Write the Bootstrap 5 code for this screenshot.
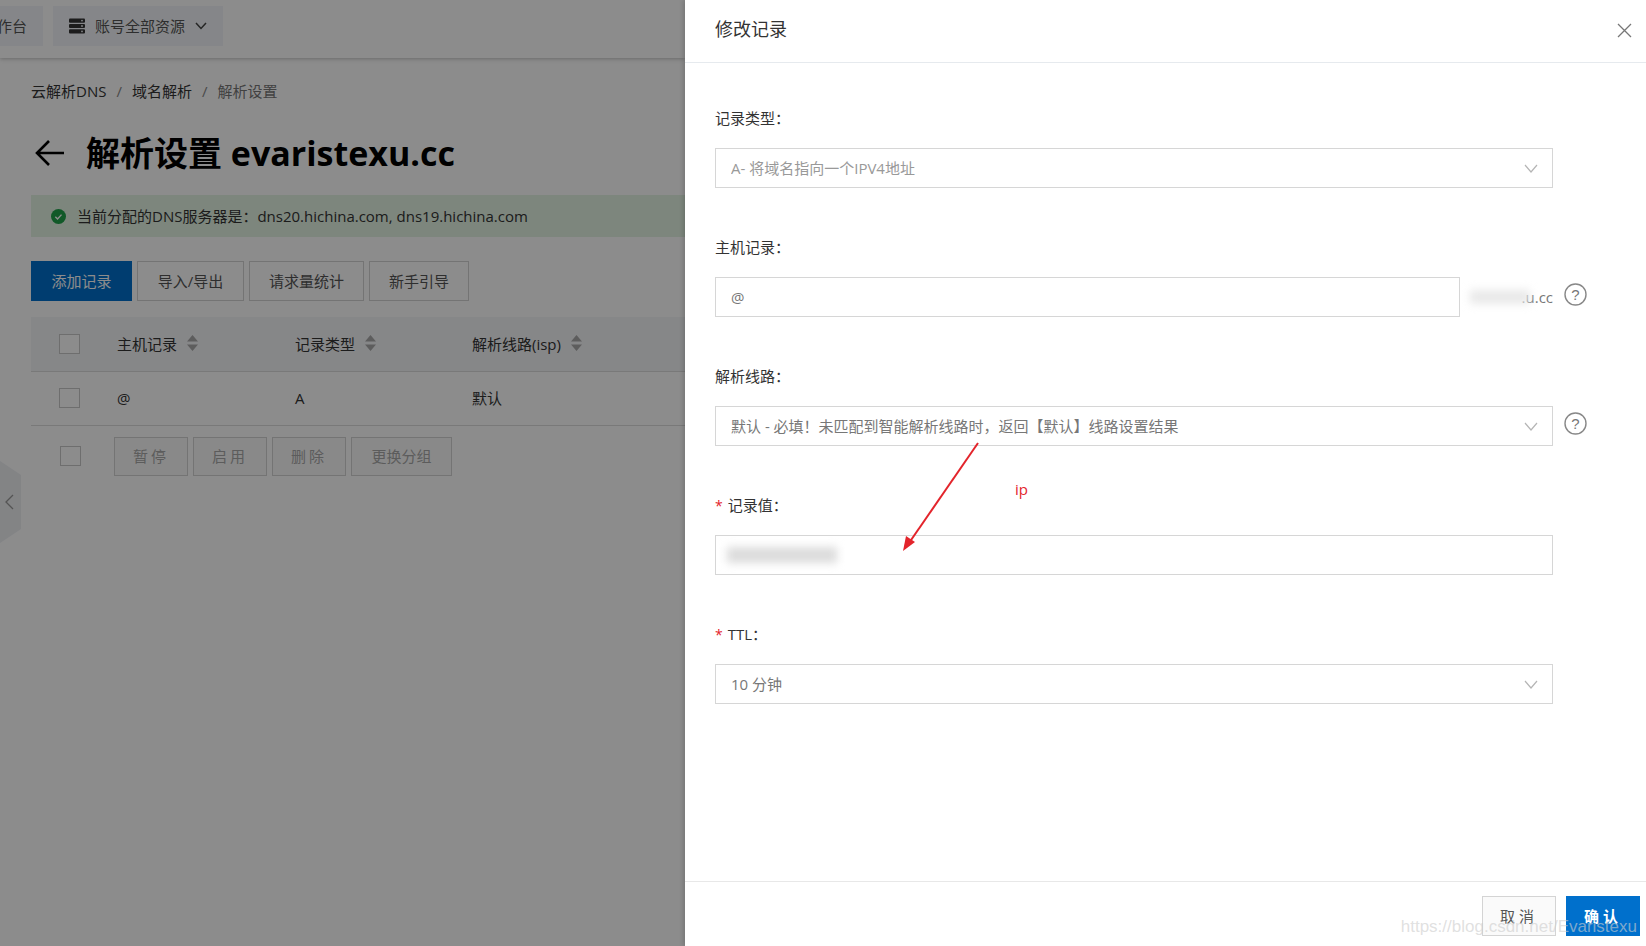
<!DOCTYPE html>
<html lang="zh-CN">
<head>
  <meta charset="UTF-8" />
  <meta name="viewport" content="width=device-width, initial-scale=1.0"/>
  <title>修改记录</title>
  <link href="https://cdn.jsdelivr.net/npm/bootstrap@5.3.0/dist/css/bootstrap.min.css" rel="stylesheet">
  <style>
    html, body { height: 946px; overflow: hidden; }
    body { font-family: "Open Sans", "Noto Sans CJK SC", sans-serif; font-size: 15px; color: #333; background: #fff; }

    /* page behind the drawer */
    .page-side { width: 685px; flex: none; height: 946px; overflow: hidden; background: #fff; }
    .page-dim { background: rgba(0,0,0,.45); inset: 0; }
    .top-strip { height: 58px; padding-top: 6px; gap: 10px; background: #fff; box-shadow: 0 1px 4px rgba(0,0,0,.25); }
    .strip-btn { height: 40px; padding: 0 16px; background: #f2f5f9; color: #555; gap: 6px; white-space: nowrap; }
    .strip-first { margin-left: -34px; }
    .page-inner { padding: 22px 0 0 31px; }
    .crumbs { --bs-breadcrumb-margin-bottom: 0; --bs-breadcrumb-divider-color: #888; --bs-breadcrumb-item-active-color: #777; --bs-breadcrumb-item-padding-x: 10px; height: 22px; line-height: 22px; font-size: 15px; }
    .crumbs a { color: #333; text-decoration: none; }
    .page-head { height: 50px; margin-top: 26px; gap: 21px; white-space: nowrap; }
    .page-head h1 { font-size: 34px; font-weight: 700; color: #000; margin: 0; line-height: 50px; }
    .dns-note { height: 42px; margin-top: 17px; background: #e4f4e4; padding-left: 20px; gap: 11px; white-space: nowrap; color: #333; }
    .tool-row { margin-top: 24px; gap: 5px; }
    .flat-btn { height: 40px; border-radius: 0; border: 1px solid #d4d4d4; background: #fff; color: #555; font-size: 15px; padding: 0; }
    .flat-blue { background: #0070cc; border-color: #0070cc; color: #fff; width: 101px; }
    .w-107 { width: 107px; }
    .w-115 { width: 115px; }
    .w-100px { width: 100px; }
    .rec-table { margin: 16px 0 0; table-layout: fixed; width: 654px; --bs-table-border-color: #ddd; color: #333; }
    .rec-table th, .rec-table td { padding: 0; vertical-align: middle; font-weight: 400; white-space: nowrap; }
    .rec-table thead th { background: #f5f6f8; height: 54px; }
    .rec-table tbody td { height: 54px; }
    .tick { display: block; width: 21px; height: 20px; border: 1px solid #c8c8c8; background: #fff; margin-left: 28px; }
    .sort-ico { margin-left: 10px; vertical-align: -1px; }
    .bulk-row { margin-top: 11px; gap: 5px; }
    .bulk-row .tick { margin-left: 29px; margin-right: 28px; }
    .bulk-btn { width: 74px; height: 39px; border-radius: 0; border: 1px solid #d4d4d4; background: #fafafa; color: #a8a8a8; font-size: 15px; padding: 0; letter-spacing: 3px; }
    .bulk-wide { width: 101px; letter-spacing: 0; }
    .side-handle { left: 0; top: 461px; width: 21px; height: 82px; background: #eef0f3; clip-path: polygon(0 0, 100% 14px, 100% 68px, 0 100%); }

    /* drawer */
    .drawer { box-shadow: -2px 0 4px rgba(0,0,0,.15); background: #fff; }
    .drawer-head { height: 63px; padding: 0 14px 2px 30px; border-bottom: 1px solid #e6eaee; }
    .drawer-head h2 { font-size: 18px; font-weight: 400; color: #333; margin: 0; }
    .drawer-form { padding: 44px 0 0 30px; }
    .field { margin-bottom: 48px; }
    .field-label { height: 22px; line-height: 22px; margin-bottom: 19px; color: #333; font-size: 15px; }
    .need { color: #e3242b; margin-right: 5px; font-size: 14px; }
    .ctl-w { width: 838px; }
    .form-control.ctl, .form-select.ctl { height: 40px; border-radius: 0; border: 1px solid #d6d6d6; background-color: #fff; color: #777; font-size: 15px; padding: 0 15px; box-shadow: none; }
    .form-select.ctl { padding-right: 40px; background-image: url("data:image/svg+xml,%3Csvg xmlns='http://www.w3.org/2000/svg' width='14' height='9' viewBox='0 0 14 9'%3E%3Cpath d='M1 1l6 7 6-7' fill='none' stroke='%23b5b5b5' stroke-width='1.2'/%3E%3C/svg%3E"); background-size: 14px 9px; background-position: right 14px center; }
    .form-select.ctl:disabled { color: #999; }
    .ctl-host { width: 745px; }
    .host-suffix { width: 93px; color: #777; line-height: 40px; white-space: nowrap; font-size: 15px; }
    .smudge { background: #e4e4e4; filter: blur(4px); }
    .smudge-host { left: 10px; top: 13px; width: 60px; height: 14px; background: #e9e9e9; }
    .smudge-ip { left: 12px; top: 12px; width: 110px; height: 16px; background: #dcdcdc; }
    .help-ico { flex: none; margin: 6px 0 0 11px; }
    .help-row { width: 873px; }
    .drawer-foot { height: 65px; margin-top: auto; border-top: 1px solid #e8e8e8; padding: 14px 6px 0 0; gap: 10px; }
    .foot-btn { width: 74px; height: 40px; border-radius: 0; font-size: 15px; padding: 0; letter-spacing: 4px; }
    .foot-cancel { background: #fafafa; border: 1px solid #d4d4d4; color: #555; }
    .foot-ok { background: #0070cc; border: 1px solid #0070cc; color: #fff; font-weight: 700; }
    .red-arrow { left: 0; top: 0; pointer-events: none; }
    .ip-note { left: 330px; top: 478px; color: #e3242b; font-size: 15px; line-height: 22px; }
    .stamp { right: 9px; bottom: 9px; font-family: "Liberation Sans", sans-serif; font-size: 17px; line-height: 20px; color: rgba(205,205,205,.62); white-space: nowrap; pointer-events: none; }
  </style>
</head>
<body class="d-flex">

  <!-- page behind the drawer -->
  <div class="page-side position-relative">
    <div class="top-strip d-flex align-items-start">
      <div class="strip-btn strip-first d-flex align-items-center">工作台</div>
      <div class="strip-btn d-flex align-items-center">
        <svg width="16" height="16" viewBox="0 0 16 16"><g fill="#333"><rect y="0.5" width="16" height="4.2" rx="1"/><rect y="5.9" width="16" height="4.2" rx="1"/><rect y="11.3" width="16" height="4.2" rx="1"/></g><g fill="#f2f5f9"><circle cx="13" cy="2.6" r=".9"/><circle cx="13" cy="8" r=".9"/><circle cx="13" cy="13.4" r=".9"/></g></svg>
        <span class="ms-1">账号全部资源</span>
        <svg class="ms-1" width="12" height="8" viewBox="0 0 12 8"><path d="M1 1l5 5.5L11 1" fill="none" stroke="#444" stroke-width="1.5"/></svg>
      </div>
    </div>

    <div class="page-inner">
      <nav>
        <ol class="breadcrumb crumbs">
          <li class="breadcrumb-item"><a href="#">云解析DNS</a></li>
          <li class="breadcrumb-item"><a href="#">域名解析</a></li>
          <li class="breadcrumb-item active">解析设置</li>
        </ol>
      </nav>

      <div class="page-head d-flex align-items-center">
        <svg class="ms-1" width="30" height="30" viewBox="0 0 30 30"><path d="M14 3L2 15l12 12M2 15h27" fill="none" stroke="#000" stroke-width="2.6"/></svg>
        <h1>解析设置 evaristexu.cc</h1>
      </div>

      <div class="dns-note d-flex align-items-center">
        <svg width="15" height="15" viewBox="0 0 16 16"><circle cx="8" cy="8" r="8" fill="#1fa24a"/><path d="M4.6 8.2l2.4 2.4 4.2-4.6" fill="none" stroke="#fff" stroke-width="1.5"/></svg>
        <span>当前分配的DNS服务器是：dns20.hichina.com, dns19.hichina.com</span>
      </div>

      <div class="tool-row d-flex">
        <button class="btn flat-btn flat-blue">添加记录</button>
        <button class="btn flat-btn w-107">导入/导出</button>
        <button class="btn flat-btn w-115">请求量统计</button>
        <button class="btn flat-btn w-100px">新手引导</button>
      </div>

      <table class="table rec-table">
        <colgroup><col style="width:86px"><col style="width:178px"><col style="width:177px"><col></colgroup>
        <thead>
          <tr>
            <th><span class="tick"></span></th>
            <th>主机记录<svg class="sort-ico" width="11" height="16" viewBox="0 0 11 16"><path d="M5.5 0L11 6.5H0zM5.5 16L0 9.5h11z" fill="#aaa"/></svg></th>
            <th>记录类型<svg class="sort-ico" width="11" height="16" viewBox="0 0 11 16"><path d="M5.5 0L11 6.5H0zM5.5 16L0 9.5h11z" fill="#aaa"/></svg></th>
            <th>解析线路(isp)<svg class="sort-ico" width="11" height="16" viewBox="0 0 11 16"><path d="M5.5 0L11 6.5H0zM5.5 16L0 9.5h11z" fill="#aaa"/></svg></th>
          </tr>
        </thead>
        <tbody>
          <tr>
            <td><span class="tick"></span></td>
            <td>@</td>
            <td>A</td>
            <td>默认</td>
          </tr>
        </tbody>
      </table>

      <div class="bulk-row d-flex align-items-center">
        <span class="tick"></span>
        <button class="btn bulk-btn">暂停</button>
        <button class="btn bulk-btn">启用</button>
        <button class="btn bulk-btn">删除</button>
        <button class="btn bulk-btn bulk-wide">更换分组</button>
      </div>
    </div>

    <div class="side-handle position-absolute d-flex align-items-center">
      <svg class="ms-1" width="10" height="16" viewBox="0 0 10 16"><path d="M9 1L2 8l7 7" fill="none" stroke="#999" stroke-width="1.3"/></svg>
    </div>

    <div class="page-dim position-absolute"></div>
  </div>

  <!-- drawer -->
  <div class="drawer flex-grow-1 d-flex flex-column position-relative">
    <div class="drawer-head d-flex align-items-center justify-content-between">
      <h2>修改记录</h2>
      <svg width="15" height="15" viewBox="0 0 15 15"><path d="M1 1l13 13M14 1L1 14" fill="none" stroke="#777" stroke-width="1.3"/></svg>
    </div>

    <form class="drawer-form">
      <div class="field">
        <div class="field-label">记录类型：</div>
        <select class="form-select ctl ctl-w" disabled><option>A- 将域名指向一个IPV4地址</option></select>
      </div>

      <div class="field">
        <div class="field-label">主机记录：</div>
        <div class="d-flex help-row">
          <input class="form-control ctl ctl-host" type="text" value="@">
          <div class="host-suffix position-relative text-end">
            <span class="smudge smudge-host position-absolute"></span>.u.cc
          </div>
          <svg class="help-ico" width="23" height="23" viewBox="0 0 23 23"><circle cx="11.5" cy="11.5" r="10.5" fill="none" stroke="#888" stroke-width="1.4"/><text x="11.5" y="16.5" text-anchor="middle" font-family="Liberation Sans" font-size="15" fill="#777">?</text></svg>
        </div>
      </div>

      <div class="field">
        <div class="field-label">解析线路：</div>
        <div class="d-flex help-row">
          <select class="form-select ctl ctl-w flex-none"><option>默认 - 必填！未匹配到智能解析线路时，返回【默认】线路设置结果</option></select>
          <svg class="help-ico" width="23" height="23" viewBox="0 0 23 23"><circle cx="11.5" cy="11.5" r="10.5" fill="none" stroke="#888" stroke-width="1.4"/><text x="11.5" y="16.5" text-anchor="middle" font-family="Liberation Sans" font-size="15" fill="#777">?</text></svg>
        </div>
      </div>

      <div class="field">
        <div class="field-label"><span class="need">*</span>记录值：</div>
        <div class="position-relative ctl-w">
          <input class="form-control ctl" type="text" value="">
          <span class="smudge smudge-ip position-absolute"></span>
        </div>
      </div>

      <div class="field mb-0">
        <div class="field-label"><span class="need">*</span>TTL：</div>
        <select class="form-select ctl ctl-w"><option>10 分钟</option></select>
      </div>
    </form>

    <div class="drawer-foot d-flex justify-content-end align-items-start">
      <button class="btn foot-btn foot-cancel">取消</button>
      <button class="btn foot-btn foot-ok">确认</button>
    </div>

    <!-- red annotation drawn on the screenshot -->
    <svg class="red-arrow position-absolute" width="400" height="600" viewBox="0 0 400 600">
      <path d="M293 443L224 543" fill="none" stroke="#e3242b" stroke-width="2"/>
      <path d="M218 551l3-15 9 6z" fill="#e3242b"/>
    </svg>
    <span class="ip-note position-absolute">ip</span>
    <span class="stamp position-absolute">https://blog.csdn.net/Evaristexu</span>
  </div>

  <script src="https://cdn.jsdelivr.net/npm/bootstrap@5.3.0/dist/js/bootstrap.bundle.min.js"></script>
</body>
</html>
